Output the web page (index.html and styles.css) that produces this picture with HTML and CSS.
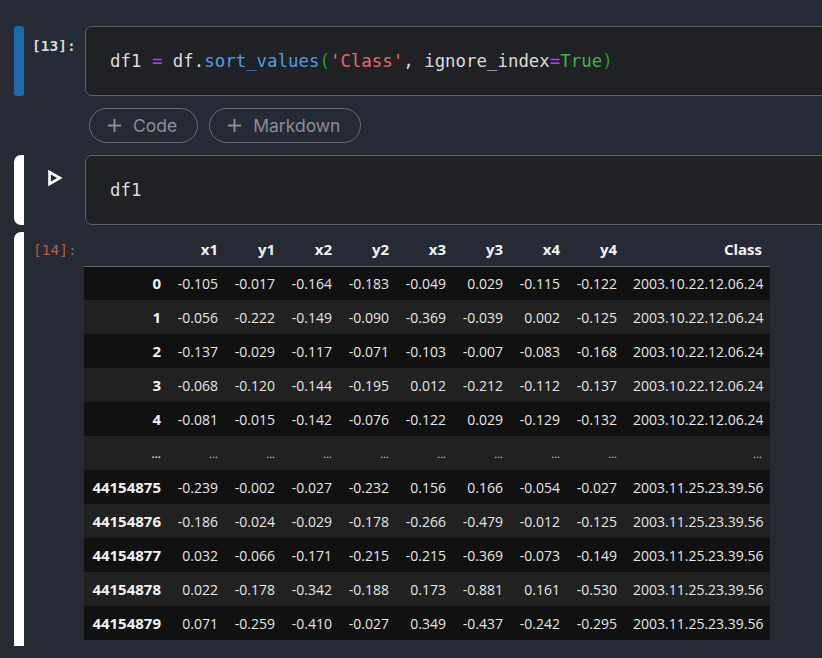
FILE: index.html
```html
<!DOCTYPE html>
<html>
<head>
<meta charset="utf-8">
<link rel="stylesheet" href="styles.css">
</head>
<body>
<div class="nb">
  <div class="cell">
    <div class="bar bar-blue"></div>
    <div class="prompt">[13]:</div>
    <div class="code"><span>df1 </span><span class="op">=</span><span> df.</span><span class="fn">sort_values</span><span class="par">(</span><span class="str">'Class'</span><span>, ignore_index</span><span class="op">=</span><span class="kw">True</span><span class="par">)</span></div>
  </div>
  <div class="adders">
    <div class="pill"><svg class="plus" width="15" height="15" viewBox="0 0 15 15"><path d="M7.5 1v13M1 7.5h13" stroke="#8b8e95" stroke-width="2" fill="none"/></svg><span>Code</span></div>
    <div class="pill"><svg class="plus" width="15" height="15" viewBox="0 0 15 15"><path d="M7.5 1v13M1 7.5h13" stroke="#8b8e95" stroke-width="2" fill="none"/></svg><span>Markdown</span></div>
  </div>
  <div class="cell active">
    <div class="bar bar-white"></div>
    <div class="prompt run"><svg width="16" height="18" viewBox="0 0 16 18"><path d="M2.5 3 L2.5 15 L13 9 Z" stroke="#ffffff" stroke-width="2.6" stroke-linejoin="miter" fill="none"/></svg></div>
    <div class="code"><span>df1</span></div>
  </div>
  <div class="cell output">
    <div class="bar bar-white bar-out"></div>
    <div class="prompt out">[14]:</div>
    <div class="outwrap">
      <table class="df">
        <thead>
          <tr><th></th><th>x1</th><th>y1</th><th>x2</th><th>y2</th><th>x3</th><th>y3</th><th>x4</th><th>y4</th><th>Class</th></tr>
        </thead>
        <tbody>
          <tr><th>0</th><td>-0.105</td><td>-0.017</td><td>-0.164</td><td>-0.183</td><td>-0.049</td><td>0.029</td><td>-0.115</td><td>-0.122</td><td>2003.10.22.12.06.24</td></tr>
          <tr><th>1</th><td>-0.056</td><td>-0.222</td><td>-0.149</td><td>-0.090</td><td>-0.369</td><td>-0.039</td><td>0.002</td><td>-0.125</td><td>2003.10.22.12.06.24</td></tr>
          <tr><th>2</th><td>-0.137</td><td>-0.029</td><td>-0.117</td><td>-0.071</td><td>-0.103</td><td>-0.007</td><td>-0.083</td><td>-0.168</td><td>2003.10.22.12.06.24</td></tr>
          <tr><th>3</th><td>-0.068</td><td>-0.120</td><td>-0.144</td><td>-0.195</td><td>0.012</td><td>-0.212</td><td>-0.112</td><td>-0.137</td><td>2003.10.22.12.06.24</td></tr>
          <tr><th>4</th><td>-0.081</td><td>-0.015</td><td>-0.142</td><td>-0.076</td><td>-0.122</td><td>0.029</td><td>-0.129</td><td>-0.132</td><td>2003.10.22.12.06.24</td></tr>
          <tr class="dots"><th>...</th><td>...</td><td>...</td><td>...</td><td>...</td><td>...</td><td>...</td><td>...</td><td>...</td><td>...</td></tr>
          <tr><th>44154875</th><td>-0.239</td><td>-0.002</td><td>-0.027</td><td>-0.232</td><td>0.156</td><td>0.166</td><td>-0.054</td><td>-0.027</td><td>2003.11.25.23.39.56</td></tr>
          <tr><th>44154876</th><td>-0.186</td><td>-0.024</td><td>-0.029</td><td>-0.178</td><td>-0.266</td><td>-0.479</td><td>-0.012</td><td>-0.125</td><td>2003.11.25.23.39.56</td></tr>
          <tr><th>44154877</th><td>0.032</td><td>-0.066</td><td>-0.171</td><td>-0.215</td><td>-0.215</td><td>-0.369</td><td>-0.073</td><td>-0.149</td><td>2003.11.25.23.39.56</td></tr>
          <tr><th>44154878</th><td>0.022</td><td>-0.178</td><td>-0.342</td><td>-0.188</td><td>0.173</td><td>-0.881</td><td>0.161</td><td>-0.530</td><td>2003.11.25.23.39.56</td></tr>
          <tr><th>44154879</th><td>0.071</td><td>-0.259</td><td>-0.410</td><td>-0.027</td><td>0.349</td><td>-0.437</td><td>-0.242</td><td>-0.295</td><td>2003.11.25.23.39.56</td></tr>
        </tbody>
      </table>
    </div>
  </div>
</div>
</body>
</html>
```
FILE: styles.css
```css
html, body {
  margin: 0;
  padding: 0;
  background: #262a35;
  overflow: hidden;
}
body {
  width: 822px;
  height: 658px;
}
.nb {
  padding-top: 26px;
}
.cell {
  display: flex;
  align-items: stretch;
  padding-left: 14px;
}
.bar {
  width: 10px;
  flex: none;
}
.bar-blue {
  background: #1f6aa8;
  border-radius: 3px;
}
.bar-white {
  background: #ffffff;
  border-radius: 7px 0 0 7px;
}
.bar-out {
  border-radius: 7px 0 0 0;
}
.prompt {
  width: 61px;
  flex: none;
  box-sizing: border-box;
  padding: 11px 0 0 8px;
  font-family: "DejaVu Sans Mono", monospace;
  font-size: 14.5px;
  font-weight: 700;
  color: #d8d8d8;
  line-height: 18px;
}
.prompt.run {
  padding: 14px 0 0 23px;
}
.prompt.run svg {
  display: block;
}
.prompt.out {
  padding: 9px 0 0 9px;
  font-weight: 400;
  color: #b55d45;
}
.code {
  flex: 1;
  height: 70px;
  box-sizing: border-box;
  margin-right: -12px;
  background: #202124;
  border: 1px solid #5e6168;
  border-radius: 7px;
  padding: 0 0 0 24px;
  display: flex;
  align-items: center;
  font-family: "DejaVu Sans Mono", monospace;
  font-size: 17.4px;
  color: #dcdcdc;
  white-space: pre;
}
.code .op { color: #b53cff; }
.code .fn { color: #4f9ee3; }
.code .par { color: #1ca51c; }
.code .str { color: #e46a6a; }
.code .kw { color: #45b04a; }

.adders {
  display: flex;
  gap: 11px;
  padding-left: 89px;
  margin-top: 12px;
  margin-bottom: 12px;
}
.pill {
  height: 35px;
  box-sizing: border-box;
  border: 1px solid #6a6d74;
  border-radius: 18px;
  display: flex;
  align-items: center;
  gap: 11px;
  padding: 0 20px 0 17px;
  font-family: Inter, "Noto Sans", sans-serif;
  font-size: 17.5px;
  color: #8b8e95;
}
.plus {
  display: block;
}
.output {
  margin-top: 7px;
}
.outwrap {
  padding-bottom: 6px;
}
.df {
  border-collapse: collapse;
  table-layout: fixed;
  width: 686px;
  margin-left: -1px;
  font-family: "Open Sans", "Noto Sans", sans-serif;
  font-size: 14px;
  color: #e6e6e6;
}
.df th, .df td {
  height: 34px;
  padding: 0 8px;
  text-align: right;
  white-space: nowrap;
  box-sizing: border-box;
}
.df th {
  font-weight: 700;
  font-size: 15px;
  color: #f2f2f2;
}
.df thead th {
  border-bottom: 1px solid #60636a;
}
.df th:first-child { width: 85px; }
.df th:last-child { width: 145px; }
.df tbody tr:nth-child(odd) { background: #111111; }
.df tbody tr:nth-child(even) { background: #212121; }
.df tr.dots th, .df tr.dots td {
  font-size: 11px;
  color: #cfcfcf;
}
```
